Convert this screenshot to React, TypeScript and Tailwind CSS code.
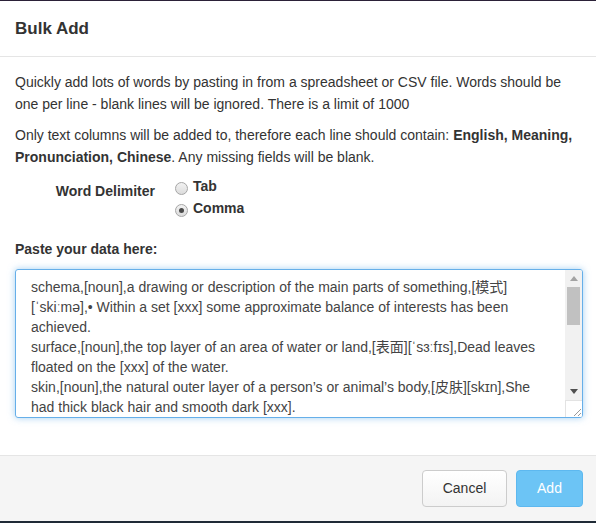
import React from 'react'

const lines = [
  'schema,[noun],a drawing or description of the main parts of something,[模式]',
  '[ˈskiːmə],• Within a set [xxx] some approximate balance of interests has been',
  'achieved.',
  'surface,[noun],the top layer of an area of water or land,[表面][ˈsɜːfɪs],Dead leaves',
  'floated on the [xxx] of the water.',
  'skin,[noun],the natural outer layer of a person’s or animal’s body,[皮肤][skɪn],She',
  'had thick black hair and smooth dark [xxx].',
]

function Radio({ checked, label }: { checked?: boolean; label: string }) {
  return (
    <div className="flex items-center h-[22px]">
      <span className="w-[13px] h-[13px] rounded-full border border-[#a6a6a6] bg-gradient-to-b from-[#f2f2f2] to-[#dcdcdc] flex items-center justify-center mt-[3px]">
        {checked && <span className="w-[5px] h-[5px] rounded-full bg-[#4a4a4a]" />}
      </span>
      <span className="ml-[5px] font-bold leading-none -mt-[3px]">{label}</span>
    </div>
  )
}

export default function App() {
  return (
    <div className="w-[596px] h-[523px] bg-white text-[#333] text-[14px] overflow-hidden flex flex-col border-t border-[#2b2138] font-['Liberation_Sans',Arial,sans-serif]">
      {/* Header */}
      <div className="h-[56px] px-[15px] flex items-center border-b border-[#e5e5e5] shrink-0">
        <h4 className="text-[17px] font-bold text-[#333]">Bulk Add</h4>
      </div>

      {/* Body */}
      <div className="px-[15px] pt-[14px] flex-1">
        <p className="leading-[22px] mb-[9px]">
          Quickly add lots of words by pasting in from a spreadsheet or CSV file. Words should be one per line - blank lines will be ignored. There is a limit of 1000
        </p>
        <p className="leading-[22px]">
          Only text columns will be added to, therefore each line should contain: <b>English, Meaning, Pronunciation, Chinese</b>. Any missing fields will be blank.
        </p>

        <div className="flex mt-[7px]">
          <div className="w-[140px] text-right font-bold pt-[5px] leading-[22px]">Word Delimiter</div>
          <div className="ml-[20px] flex flex-col mt-[1px]">
            <Radio label="Tab" />
            <Radio label="Comma" checked />
          </div>
        </div>

        <div className="font-bold leading-[22px] mt-[18px]">Paste your data here:</div>

        <div className="mt-[9px] -mr-[2px] h-[149px] border border-[#66afe9] rounded-[3px] shadow-[0_0_7px_rgba(102,175,233,0.6)] flex overflow-hidden">
          <div className="flex-1 pl-[15px] pt-[7px] leading-[20px] text-[14px] text-[#444] whitespace-nowrap font-['Liberation_Sans','Noto_Sans_CJK_SC',sans-serif]">
            {lines.map((l, i) => (
              <div key={i}>{l}</div>
            ))}
          </div>
          {/* scrollbar */}
          <div className="w-[17px] flex flex-col bg-[#f1f1f1]">
            <div className="h-[17px] flex items-center justify-center">
              <svg width="8" height="5" viewBox="0 0 8 5"><path d="M4 0L8 5H0z" fill="#a3a3a3" /></svg>
            </div>
            <div className="mx-[2px] h-[38px] bg-[#c1c1c1]" />
            <div className="flex-1" />
            <div className="h-[17px] flex items-center justify-center">
              <svg width="8" height="5" viewBox="0 0 8 5"><path d="M0 0H8L4 5z" fill="#505050" /></svg>
            </div>
            <div className="h-[17px] bg-white border-t border-l border-[#e3e3e3] flex items-end justify-end">
              <svg width="11" height="11" viewBox="0 0 11 11">
                <path d="M10 3L3 10M10 7L7 10" stroke="#999" strokeWidth="1" />
              </svg>
            </div>
          </div>
        </div>
      </div>

      {/* Footer */}
      <div className="h-[68px] bg-[#f5f5f5] border-t border-[#e5e5e5] px-[13px] flex items-center justify-end gap-[9px] border-b-2 border-b-[#1f2a36] shrink-0">
        <button className="h-[37px] w-[85px] rounded-[4px] border border-[#ccc] bg-gradient-to-b from-white to-[#f3f3f3] text-[#333] text-[14px]">
          Cancel
        </button>
        <button className="h-[37px] w-[67px] rounded-[4px] border border-[#5db8ef] bg-[#6cc4f5] text-white text-[14px]">
          Add
        </button>
      </div>
    </div>
  )
}
